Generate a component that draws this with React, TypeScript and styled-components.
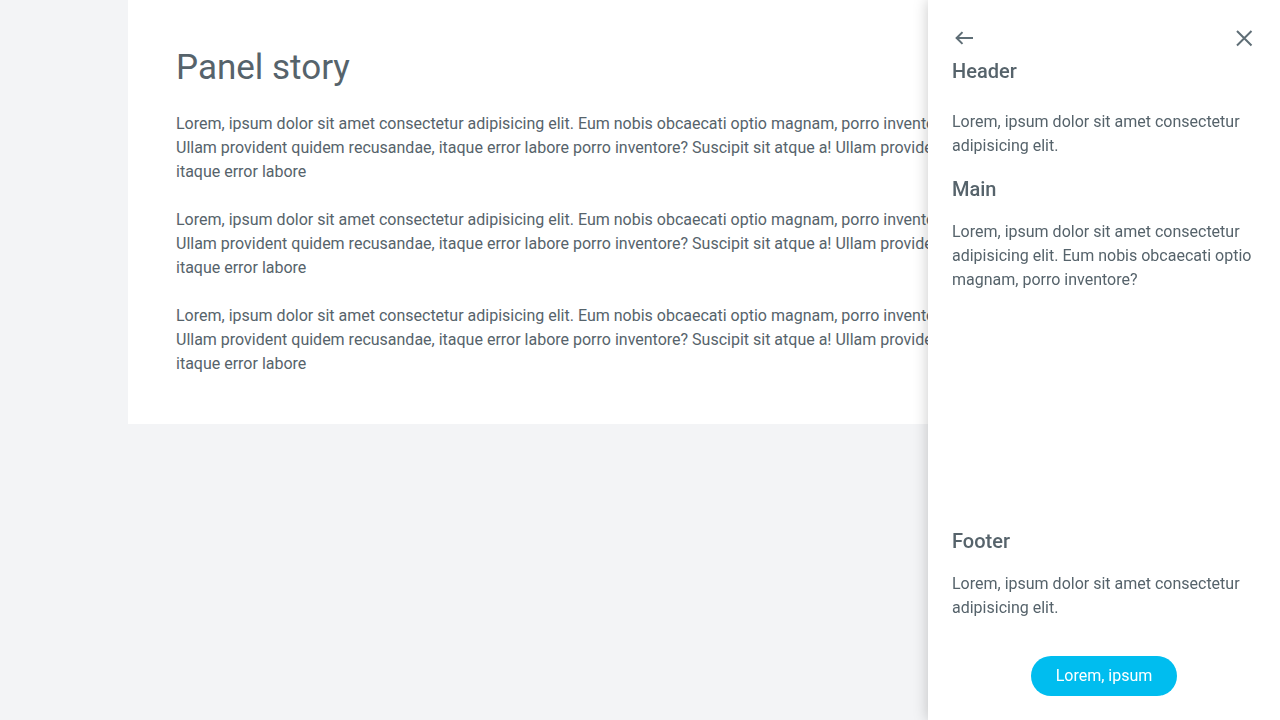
import React from "react";
import styled, { createGlobalStyle } from "styled-components";

const Global = createGlobalStyle`
  html, body { margin: 0; padding: 0; }
  body {
    background: #f3f4f6;
    font-family: Roboto, "Liberation Sans", sans-serif;
    color: #56636b;
  }
  * { box-sizing: border-box; }
`;

const Page = styled.div`
  min-height: 720px;
  display: flex;
  justify-content: center;
  align-items: flex-start;
`;

const Card = styled.main`
  width: 1024px;
  background: #ffffff;
  padding: 49px 48px 48px;
`;

const Title = styled.h1`
  margin: 0 0 25px;
  font-size: 35px;
  line-height: 38px;
  font-weight: 400;
  color: #56636b;
`;

const Para = styled.p<{ $gap?: number; $top?: number }>`
  margin: ${(p) => p.$top ?? 0}px 0 ${(p) => p.$gap ?? 0}px;
  font-size: 16px;
  line-height: 24px;
  color: #56636b;
`;

const Panel = styled.aside`
  position: fixed;
  top: 0;
  right: 0;
  width: 352px;
  height: 100vh;
  background: #ffffff;
  box-shadow: 0 0 14px rgba(0, 0, 0, 0.22);
  padding: 26px 24px 24px;
  display: flex;
  flex-direction: column;
`;

const IconRow = styled.div`
  display: flex;
  justify-content: space-between;
  align-items: center;
  height: 24px;
`;

const IconButton = styled.button`
  width: 24px;
  height: 24px;
  padding: 0;
  border: 0;
  background: transparent;
  color: #5f6e76;
  cursor: pointer;
  display: flex;
  align-items: center;
  justify-content: center;
`;

const Heading = styled.h2<{ $top: number }>`
  margin: ${(p) => p.$top}px 0 0;
  font-size: 20px;
  line-height: 24px;
  font-weight: 500;
  color: #56636b;
`;

const Section = styled.section<{ $grow?: boolean }>`
  display: flex;
  flex-direction: column;
  flex: ${(p) => (p.$grow ? 1 : "none")};
`;

const Footer = styled.footer`
  display: flex;
  flex-direction: column;
`;

const PrimaryButton = styled.button`
  align-self: center;
  margin-top: 36px;
  height: 40px;
  padding: 0 25px 2px;
  border: 0;
  border-radius: 20px;
  background: #00bdef;
  color: #ffffff;
  font-family: Roboto, "Liberation Sans", sans-serif;
  font-size: 16px;
  cursor: pointer;
`;

const ArrowBack = () => (
  <svg width="24" height="24" viewBox="0 0 24 24" fill="none" stroke="currentColor" strokeWidth="2" strokeLinecap="square" strokeLinejoin="miter">
    <path d="M5 12H20" />
    <path d="M9.8 6.8L4.6 12L9.8 17.2" />
  </svg>
);

const Close = () => (
  <svg width="24" height="24" viewBox="0 0 24 24" fill="none" stroke="currentColor" strokeWidth="2">
    <path d="M5 5L19.5 19.5M19.5 5L5 19.5" />
  </svg>
);

const lorem =
  "Lorem, ipsum dolor sit amet consectetur adipisicing elit. Eum nobis obcaecati optio magnam, porro inventore? Suscipit sit atque Ullam provident quidem recusandae, itaque error labore porro inventore? Suscipit sit atque a! Ullam provident quidem recusandae, itaque error labore";

export default function App() {
  return (
    <>
      <Global />
      <Page>
        <Card>
          <Title>Panel story</Title>
          <Para $gap={24}>{lorem}</Para>
          <Para $gap={24}>{lorem}</Para>
          <Para>{lorem}</Para>
        </Card>
      </Page>
      <Panel>
        <IconRow>
          <IconButton aria-label="Back">
            <ArrowBack />
          </IconButton>
          <IconButton aria-label="Close">
            <Close />
          </IconButton>
        </IconRow>
        <Section>
          <Heading $top={9}>Header</Heading>
          <Para $top={27}>Lorem, ipsum dolor sit amet consectetur adipisicing elit.</Para>
        </Section>
        <Section $grow>
          <Heading $top={19}>Main</Heading>
          <Para $top={19}>
            Lorem, ipsum dolor sit amet consectetur adipisicing elit. Eum nobis
            obcaecati optio magnam, porro inventore?
          </Para>
        </Section>
        <Footer>
          <Heading $top={0}>Footer</Heading>
          <Para $top={19}>Lorem, ipsum dolor sit amet consectetur adipisicing elit.</Para>
          <PrimaryButton>Lorem, ipsum</PrimaryButton>
        </Footer>
      </Panel>
    </>
  );
}
